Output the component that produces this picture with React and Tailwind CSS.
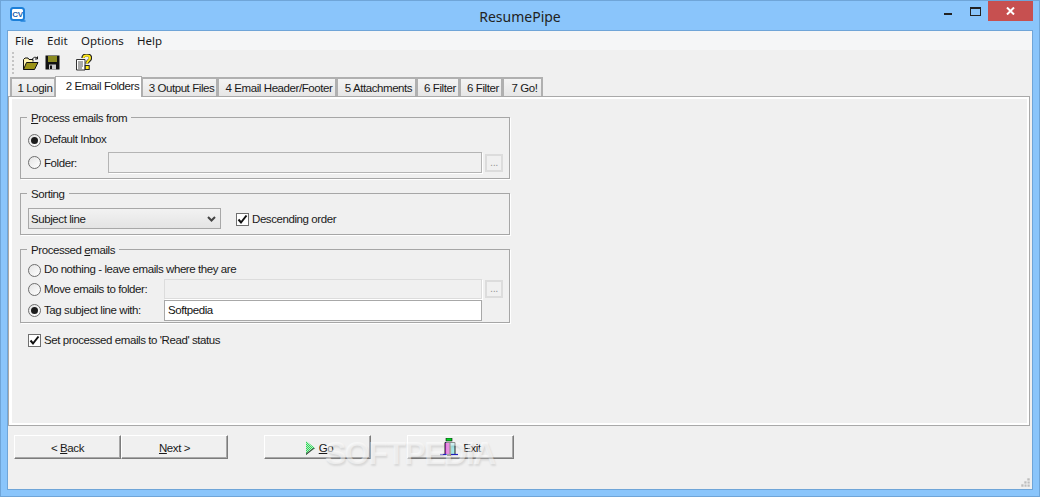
const FONT = "font-['Liberation_Sans',Arial,sans-serif] text-[11.5px] tracking-[-0.42px] text-[#1a1a1a]";

function Radio({ checked }) {
  return (
    <span className="w-[13px] h-[13px] rounded-full border border-[#6e6e6e] bg-[linear-gradient(135deg,#e4e4e4,#ffffff)] flex items-center justify-center shrink-0">
      {checked && <span className="w-[7px] h-[7px] rounded-full bg-[#1c1c1c]" />}
    </span>
  );
}

function Check() {
  return (
    <span className="w-[13px] h-[13px] border border-[#6f6f6f] bg-white flex items-center justify-center shrink-0">
      <svg width="11" height="11" viewBox="0 0 11 11">
        <path d="M1.5 5.5 L4 8.5 L9.5 1.5" fill="none" stroke="#111" strokeWidth="2" />
      </svg>
    </span>
  );
}

function Tab({ w, active, children }) {
  return active ? (
    <div className="h-[21px] -mb-[1px] -ml-[1px] relative z-10 bg-white border border-b-0 border-[#adadad] flex items-center justify-center pb-[1px] pl-[8px] leading-none whitespace-nowrap" style={{ width: w }}>
      {children}
    </div>
  ) : (
    <div className="h-[19px] bg-[linear-gradient(#f4f4f4,#e6e6e6)] border-2 border-b-0 border-[#b0b0b0] flex items-center justify-center pl-[4px] pt-[2px] leading-none -ml-[1px] first:ml-0 whitespace-nowrap" style={{ width: w }}>
      {children}
    </div>
  );
}

function Group({ legend, className, children }) {
  return (
    <fieldset className={`border border-[#a6a6a6] shadow-[1px_1px_0_#ffffff] ml-[8px] w-[490px] ${className}`}>
      <legend className="ml-[6px] px-[4px] leading-[14px]">
        <span className="relative top-[1px]">{legend}</span>
      </legend>
      {children}
    </fieldset>
  );
}

function Dots() {
  return (
    <div className="w-[18px] h-[18px] border-2 border-[#dcdcdc] bg-[#f0f0f0] flex items-center justify-center text-[#9a9a9a] text-[11px] leading-none shrink-0 ml-[3px] pb-[1px]">...</div>
  );
}

function Btn({ className = "", children }) {
  return (
    <div className={`w-[107px] h-[24px] bg-[#f0f0f0] border border-t-white border-l-white border-r-[#7c7c7c] border-b-[#7c7c7c] shadow-[inset_-1px_-1px_0_#a8a8a8] flex items-center justify-center pt-[2px] ${className}`}>
      {children}
    </div>
  );
}

function FolderIcon() {
  return (
    <svg width="17" height="15" viewBox="0 0 17 15" className="mt-[1px]">
      <path d="M1.5 13.5 V3.5 L3 2 H6 L7 3.5 H11 V5.5" fill="#fff3b0" stroke="#111" />
      <path d="M1.5 13.5 L4.5 6.5 H16 L12.5 13.5 Z" fill="#9c9418" stroke="#111" />
      <path d="M10.5 3 C11.5 1 13.5 .8 15 2 M15.5 .5 V3 H13" fill="none" stroke="#111" />
    </svg>
  );
}

function SaveIcon() {
  return (
    <svg width="15" height="15" viewBox="0 0 15 15">
      <rect x=".5" y=".5" width="14" height="14" fill="#111" />
      <rect x="3" y="1" width="9" height="6" fill="#8a8a20" />
      <rect x="4" y="9.5" width="7" height="5" fill="#c8c8c8" />
      <rect x="5" y="10.5" width="2" height="3.5" fill="#111" />
    </svg>
  );
}

function HelpIcon() {
  return (
    <svg width="16" height="17" viewBox="0 0 16 17">
      <path d="M.5 5.5 H9 V16 H.5 Z" fill="#fff" stroke="#333" />
      <path d="M2 8 H7 M2 10 H7 M2 12 H7 M2 14 H6" stroke="#555" />
      <path d="M7 4 C7 -0.2 14.5 -0.2 14.5 4 C14.5 7 11 6.5 11 9.5" fill="none" stroke="#222" strokeWidth="3.4" />
      <path d="M7.5 4 C7.5 .8 14 .8 14 4 C14 6.6 11 6.5 11 9.5" fill="none" stroke="#ffe81a" strokeWidth="2" />
      <rect x="9.2" y="11.5" width="4" height="4" fill="#ffe81a" stroke="#222" />
    </svg>
  );
}

function GoIcon() {
  return (
    <svg width="10" height="14" viewBox="0 0 10 14" className="mr-[3px]">
      <defs>
        <pattern id="goP" width="2" height="2" patternUnits="userSpaceOnUse">
          <rect width="2" height="2" fill="#2fd45a" />
          <rect width="1" height="1" fill="#b8f0c4" />
          <rect x="1" y="1" width="1" height="1" fill="#b8f0c4" />
        </pattern>
      </defs>
      <path d="M0 0 L9 7 L0 14 Z" fill="url(#goP)" />
      <path d="M9 7 L0 14 V12.5 L7.5 7 Z" fill="#444" />
    </svg>
  );
}

function ExitIcon() {
  return (
    <svg width="18" height="18" viewBox="0 0 18 18" className="mr-[5px] -mt-[2px]">
      <rect x="6" y="0" width="6" height="3" fill="#00d020" stroke="#111" strokeWidth=".6" />
      <rect x="5" y="5" width="5" height="11" fill="#e020d0" />
      <rect x="10" y="5" width="5" height="11" fill="#a8ecec" />
      <path d="M5 4.5 H15 M5 4.5 V16.5 M10 4.5 V16.5 M15 4.5 V16.5" stroke="#222" fill="none" />
      <path d="M0 16.5 H18" stroke="#2020c0" strokeWidth="1.2" />
      <rect x="7" y="16" width="4" height="2" fill="#555" />
    </svg>
  );
}

export default function App() {
  return (
    <div className={`w-[1040px] h-[497px] bg-[#8ac5fb] border border-[#6fa5d8] flex flex-col overflow-hidden relative ${FONT}`}>
      {/* Title bar */}
      <div className="h-[29px] shrink-0 relative flex items-center justify-center">
        <div className="absolute left-[9px] top-[6px] w-[16px] h-[16px]">
          <svg width="16" height="16" viewBox="0 0 16 16">
            <path d="M3 1 H11.5 Q14 1 14 3.5 V10.5 Q14 13 11.5 13 H3.5 Q1 13 1 10.5 V3.5 Q1 1 3 1 Z" fill="#fff" stroke="#1c7fd8" strokeWidth="2" />
            <path d="M10.5 14 H15.5" stroke="#1c7fd8" strokeWidth="1.4" />
            <text x="7.5" y="10" textAnchor="middle" fontFamily="Liberation Sans" fontSize="8" fontWeight="700" letterSpacing="-0.3" fill="#1a5fb0">CV</text>
          </svg>
        </div>
        <span className="font-['Noto_Sans',sans-serif] text-[14px] tracking-normal text-[#222] mt-[1px]">ResumePipe</span>
        <div className="absolute left-[943px] top-[12px] w-[8px] h-[2px] bg-[#222]" />
        <div className="absolute left-[969px] top-[6px] w-[11px] h-[9px] border border-t-2 border-[#222]" />
        <div className="absolute left-[987px] top-0 w-[45px] h-[20px] bg-[#c75050] flex items-center justify-center">
          <svg width="9" height="8" viewBox="0 0 9 8">
            <path d="M1 0.5 L8 7.5 M8 0.5 L1 7.5" stroke="#fff" strokeWidth="2" />
          </svg>
        </div>
      </div>

      {/* Client */}
      <div className="flex-1 mx-[6px] mb-[6px] border border-[#6fa5d8] bg-[#f0f0f0] flex flex-col relative">
        <div className="h-[19px] bg-[#f5f6f7] flex items-center pl-[7px] font-['Noto_Sans',sans-serif] text-[11.5px] tracking-normal text-[#1a1a1a] shrink-0">
          <span className="w-[32px]">File</span>
          <span className="w-[34px]">Edit</span>
          <span className="w-[56px]">Options</span>
          <span>Help</span>
        </div>
        {/* Toolbar */}
        <div className="h-[25px] flex items-center shrink-0 pl-[4px]">
          <div className="w-[3px] h-[22px] border-l-2 border-dotted border-[#c4c4c4]" />
          <div className="ml-[7px]"><FolderIcon /></div>
          <div className="ml-[6px]"><SaveIcon /></div>
          <div className="ml-[16px]"><HelpIcon /></div>
        </div>
        {/* Tabs */}
        <div className="h-[21px] flex items-end pl-[2px] shrink-0">
          <Tab w={46}>1 Login</Tab>
          <Tab w={87} active>2 Email Folders</Tab>
          <Tab w={77}>3 Output Files</Tab>
          <Tab w={120}>4 Email Header/Footer</Tab>
          <Tab w={81}>5 Attachments</Tab>
          <Tab w={44}>6 Filter</Tab>
          <Tab w={44}>6 Filter</Tab>
          <Tab w={41}>7 Go!</Tab>
        </div>
        {/* Page */}
        <div className="h-[330px] mr-[2px] border border-[#a9a9a9] shrink-0">
          <div className="h-full border-[3px] border-t-[2px] border-r-[2px] border-b-[2px] border-white pt-[11px] flex flex-col">
            <Group legend={<span><u>P</u>rocess emails from</span>} className="h-[69px]">
              <div className="flex items-center gap-[3px] pl-[7px] h-[14px] mt-[9px]">
                <Radio checked />
                <span>Default Inbox</span>
              </div>
              <div className="flex items-center pl-[7px] mt-[5px]">
                <Radio />
                <span className="ml-[3px] w-[64px] pt-[2px]">Folder:</span>
                <div className="w-[374px] h-[21px] border border-[#b4b4b4] shadow-[1px_1px_0_#fff] bg-[#f0f0f0]" />
                <Dots />
              </div>
            </Group>
            <Group legend="Sorting" className="h-[49px] mt-[7px]">
              <div className="flex items-center pl-[7px] mt-[8px]">
                <div className="w-[193px] h-[21px] border border-[#a8a8a8] bg-[linear-gradient(#f2f2f2,#e4e4e4)] flex items-center justify-between px-[2px]">
                  <span className="pt-[2px]">Subject line</span>
                  <svg width="9" height="6" viewBox="0 0 9 6" className="mr-[2px]">
                    <path d="M1 1 L4.5 4.5 L8 1" fill="none" stroke="#444" strokeWidth="2" />
                  </svg>
                </div>
                <div className="ml-[15px] pt-[2px]"><Check /></div>
                <span className="ml-[3px] pt-[2px]">Descending order</span>
              </div>
            </Group>
            <Group legend={<span>Processed <u>e</u>mails</span>} className="h-[81px] mt-[7px]">
              <div className="flex items-center gap-[3px] pl-[7px] h-[14px] mt-[7px]">
                <Radio />
                <span>Do nothing - leave emails where they are</span>
              </div>
              <div className="flex items-center pl-[7px] h-[20px] mt-[2px]">
                <Radio />
                <span className="ml-[3px] w-[120px] pt-[2px]">Move emails to folder:</span>
                <div className="w-[318px] h-[20px] border border-[#dcdcdc] shadow-[1px_1px_0_#fff] bg-[#f0f0f0]" />
                <Dots />
              </div>
              <div className="flex items-center pl-[7px] h-[21px] mt-[1px]">
                <Radio checked />
                <span className="ml-[3px] w-[120px]">Tag subject line with:</span>
                <div className="w-[318px] h-[21px] border border-[#a8a8a8] bg-white flex items-center pl-[3px] text-[#111]">Softpedia</div>
              </div>
            </Group>
            <div className="flex items-center gap-[3px] pl-[16px] mt-[9px]">
              <Check />
              <span>Set processed emails to 'Read' status</span>
            </div>
          </div>
        </div>
        {/* Bottom buttons */}
        <div className="flex items-center pl-[6px] mt-[9px]">
          <Btn><span className="pt-[2px]">&lt; <u>B</u>ack</span></Btn>
          <Btn><span className="pt-[2px]"><u>N</u>ext &gt;</span></Btn>
          <Btn className="ml-[36px] pl-[4px]"><GoIcon /><span className="pt-[2px]"><u>G</u>o</span></Btn>
          <Btn className="ml-[36px]"><ExitIcon /><span className="pt-[2px]">Exit</span></Btn>
        </div>
        {/* Resize grip */}
        <div className="absolute right-[2px] bottom-[2px]">
          <svg width="9" height="9" viewBox="0 0 9 9">
            <path d="M6 0h3v3h-3z M3 3h3v3h-3z M6 3h3v3h-3z M0 6h3v3h-3z M3 6h3v3h-3z M6 6h3v3h-3z" fill="#bdbdbd" stroke="#f0f0f0" strokeWidth=".6" />
          </svg>
        </div>
      </div>

      {/* Watermark */}
      <div className="absolute left-[324px] top-[432px] font-['Liberation_Sans',sans-serif] font-bold text-[32px] leading-[40px] tracking-[-1.5px] text-white/50 [text-shadow:1px_2px_2px_rgba(0,0,0,0.1)] pointer-events-none">
        SOFTPEDIA
      </div>
    </div>
  );
}
